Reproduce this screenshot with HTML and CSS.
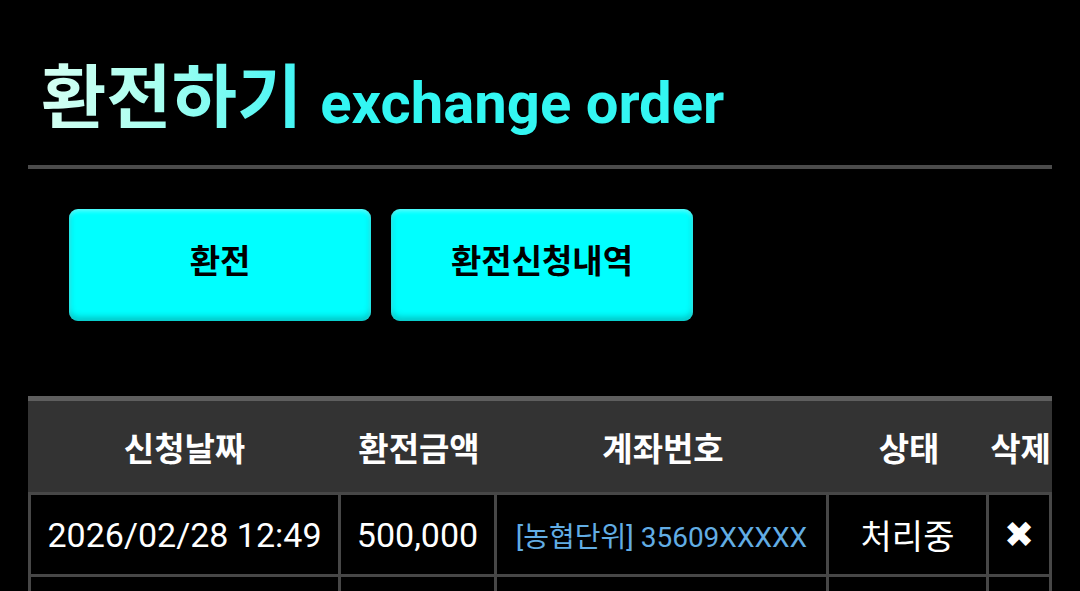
FILE: index.html
```html
<!DOCTYPE html>
<html lang="ko">
<head>
<meta charset="utf-8">
<title>환전하기</title>
<link rel="stylesheet" href="styles.css">
</head>
<body>
<div class="page">
  <h1 class="title"><span class="title-ko">환전하기</span> <span class="title-en">exchange order</span></h1>
  <hr class="divider">
  <div class="tabs">
    <button class="tab-btn">환전</button>
    <button class="tab-btn">환전신청내역</button>
  </div>
  <table class="history">
    <colgroup>
      <col class="c-date"><col class="c-amount"><col class="c-account"><col class="c-status"><col class="c-del">
    </colgroup>
    <thead>
      <tr><th>신청날짜</th><th>환전금액</th><th>계좌번호</th><th>상태</th><th>삭제</th></tr>
    </thead>
    <tbody>
      <tr>
        <td>2026/02/28 12:49</td>
        <td>500,000</td>
        <td class="account">[농협단위] 35609XXXXX</td>
        <td>처리중</td>
        <td class="del">✖</td>
      </tr>
      <tr>
        <td></td><td></td><td></td><td></td><td></td>
      </tr>
    </tbody>
  </table>
</div>
</body>
</html>
```

FILE: styles.css
```css
html, body {
  margin: 0;
  padding: 0;
  background: #000;
  overflow: hidden;
  height: 591px;
}
.page {
  padding: 0 28px;
  font-family: "Noto Sans CJK KR", Roboto, sans-serif;
  color: #fff;
}
.title {
  margin: 0;
  padding: 57px 0 0 13px;
  height: 118px;
  box-sizing: border-box;
  display: flex;
  align-items: baseline;
  gap: 18px;
  line-height: 1;
  white-space: nowrap;
}
.title-ko {
  display: inline-block;
  font-family: "Noto Sans CJK KR", sans-serif;
  font-size: 71px;
  font-weight: 700;
  background: linear-gradient(to right, #d6fff2 0%, #a8fff0 45%, #3ff5f5 100%);
  -webkit-background-clip: text;
  background-clip: text;
  color: transparent;
}
.title-en {
  font-family: Roboto, sans-serif;
  font-size: 58px;
  font-weight: 700;
  color: #33f6f2;
}
.divider {
  margin: 47px 0 0 0;
  border: 0;
  height: 4px;
  background: #4b4b4b;
}
.tabs {
  display: flex;
  gap: 20px;
  padding: 40px 0 0 41px;
}
.tab-btn {
  width: 302px;
  height: 112px;
  border: 0;
  border-radius: 9px;
  background: #00ffff;
  box-shadow: inset 0 -4px 6px rgba(0, 90, 90, 0.35), inset 0 2px 4px rgba(255, 255, 255, 0.4);
  font-family: "Noto Sans CJK KR", sans-serif;
  font-size: 33px;
  font-weight: 700;
  color: #000;
  padding: 0 0 12px 0;
}
.history {
  margin-top: 75px;
  width: 1024px;
  border-collapse: separate;
  border-spacing: 0;
  table-layout: fixed;
}
.c-date { width: 313px; }
.c-amount { width: 156px; }
.c-account { width: 332px; }
.c-status { width: 160px; }
.c-del { width: 63px; }
.history th {
  background: #333;
  border-top: 5px solid #5e5e5e;
  border-bottom: 3px solid #474747;
  height: 99px;
  padding: 0;
  font-family: "Noto Sans CJK KR", sans-serif;
  font-size: 33px;
  font-weight: 700;
  color: #fff;
  white-space: nowrap;
  box-sizing: border-box;
}
.history td {
  height: 79px;
  padding: 0;
  border-right: 3px solid #474747;
  border-bottom: 3px solid #474747;
  text-align: center;
  font-family: Roboto, "Noto Sans CJK KR", sans-serif;
  font-size: 34px;
  color: #fff;
  white-space: nowrap;
}
.history td:first-child {
  border-left: 3px solid #474747;
}
.history td.account {
  font-size: 28px;
  color: #62ade4;
}
.history td.del {
  font-family: "DejaVu Sans", sans-serif;
  font-size: 36px;
}
```
